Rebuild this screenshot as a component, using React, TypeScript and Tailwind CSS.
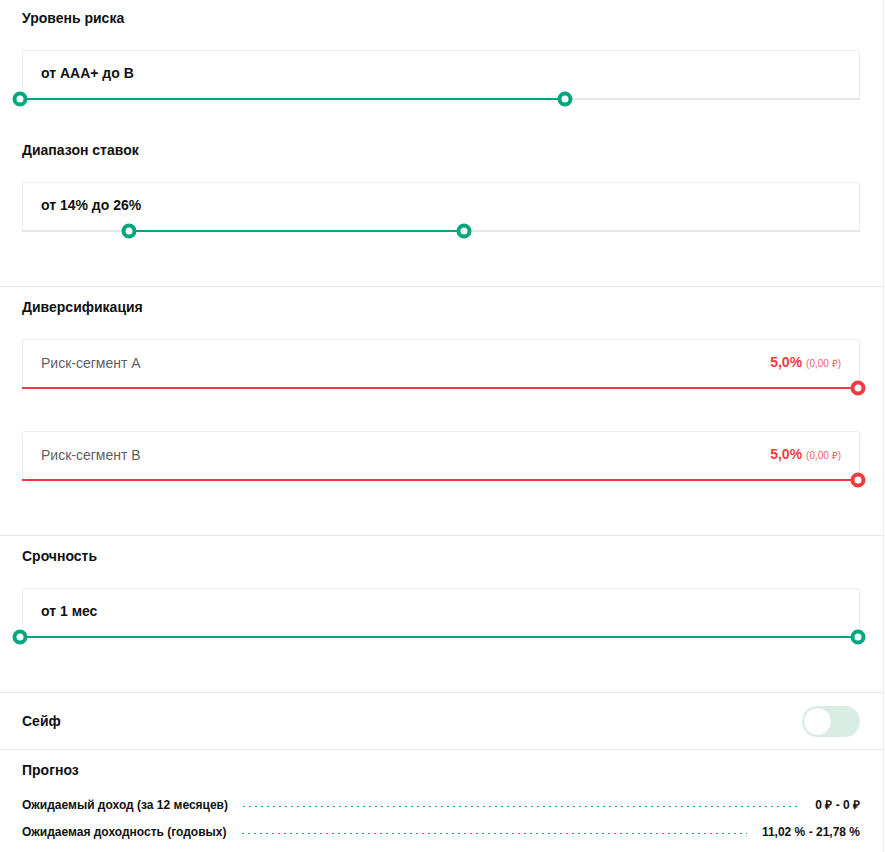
import React from "react";

type Tone = "green" | "red";

function Handle({ x, tone }: { x: number; tone: Tone }) {
  return (
    <div
      className={
        "absolute top-1/2 w-[15px] h-[15px] -translate-x-1/2 -translate-y-1/2 rounded-full bg-white border-[4px] " +
        (tone === "green" ? "border-[#00a67e]" : "border-[#ef3b41]")
      }
      style={{ left: x }}
    />
  );
}

function SliderCard({
  children,
  from,
  to,
  tone = "green",
  className = "",
}: {
  children: React.ReactNode;
  from: number;
  to: number;
  tone?: Tone;
  className?: string;
}) {
  const fillStart = Math.max(from, 0);
  return (
    <div className={className}>
      <div className="h-[48px] border border-b-0 border-[#ededed] rounded-t-[3px] pl-[18px] pr-[18px] pt-[12px]">
        {children}
      </div>
      <div className="relative h-[2px] bg-[#e6e6e6]">
        <div
          className={"absolute top-0 h-[2px] " + (tone === "green" ? "bg-[#00a67e]" : "bg-[#ef3b41]")}
          style={{ left: fillStart, width: to - fillStart }}
        />
        <Handle x={from} tone={tone} />
        <Handle x={to} tone={tone} />
      </div>
    </div>
  );
}

function Title({ children, className = "" }: { children: React.ReactNode; className?: string }) {
  return <div className={"text-[14px] leading-[20px] font-bold text-[#111] " + className}>{children}</div>;
}

function CardValue({ children }: { children: React.ReactNode }) {
  return <div className="text-[14px] leading-[20px] font-bold text-[#111]">{children}</div>;
}

function SegmentRow({ name }: { name: string }) {
  return (
    <div className="flex items-center justify-between">
      <span className="text-[14px] leading-[20px] text-[#5b6068]">{name}</span>
      <span className="flex items-baseline gap-[4px]">
        <span className="text-[14px] leading-[20px] font-bold text-[#ef3b41]">5,0%</span>
        <span className="text-[10px] leading-[20px] text-[#f0646c]">(0,00 ₽)</span>
      </span>
    </div>
  );
}

function Leader({ label, value }: { label: string; value: string }) {
  return (
    <div className="flex items-center h-[18px] text-[12px] font-bold text-[#111]">
      <span className="whitespace-nowrap">{label}</span>
      <div className="flex-1 mx-[15px] mt-[2px] h-[1px] bg-[linear-gradient(to_right,#14b088_2px,transparent_2px)] bg-[length:6px_1px] bg-repeat-x" />
      <span className="whitespace-nowrap">{value}</span>
    </div>
  );
}

export default function App() {
  return (
    <div className="w-[884px] min-h-[852px] bg-white border-r border-[#ececec] font-['Liberation_Sans',Arial,sans-serif]">
      {/* Risk + rates */}
      <section className="pl-[22px] pr-[23px] pt-[8px] pb-[54px] border-b border-[#e3e6ee]">
        <Title>Уровень риска</Title>
        <SliderCard from={-2} to={543} className="mt-[22px]">
          <CardValue>от AAA+ до B</CardValue>
        </SliderCard>
        <Title className="mt-[40px]">Диапазон ставок</Title>
        <SliderCard from={107} to={442} className="mt-[22px]">
          <CardValue>от 14% до 26%</CardValue>
        </SliderCard>
      </section>

      {/* Diversification */}
      <section className="pl-[22px] pr-[23px] pt-[10px] pb-[54px] border-b border-[#e3e6ee]">
        <Title>Диверсификация</Title>
        <SliderCard from={-100} to={836} tone="red" className="mt-[22px]">
          <SegmentRow name="Риск-сегмент А" />
        </SliderCard>
        <SliderCard from={-100} to={836} tone="red" className="mt-[42px]">
          <SegmentRow name="Риск-сегмент В" />
        </SliderCard>
      </section>

      {/* Term */}
      <section className="pl-[22px] pr-[23px] pt-[10px] pb-[54px] border-b border-[#e3e6ee]">
        <Title>Срочность</Title>
        <SliderCard from={-2} to={836} className="mt-[22px]">
          <CardValue>от 1 мес</CardValue>
        </SliderCard>
      </section>

      {/* Safe */}
      <section className="pl-[22px] pr-[23px] h-[57px] flex items-center justify-between border-b border-[#e3e6ee]">
        <Title>Сейф</Title>
        <div className="w-[58px] h-[31px] rounded-full bg-[#d9ede5] p-[1px] flex items-center">
          <div className="w-[29px] h-[29px] rounded-full bg-white border border-[#d3e8df]" />
        </div>
      </section>

      {/* Forecast */}
      <section className="pl-[22px] pr-[23px] pt-[10px]">
        <Title>Прогноз</Title>
        <div className="mt-[16px] flex flex-col gap-[9px]">
          <Leader label="Ожидаемый доход (за 12 месяцев)" value="0 ₽ - 0 ₽" />
          <Leader label="Ожидаемая доходность (годовых)" value="11,02 % - 21,78 %" />
        </div>
      </section>
    </div>
  );
}
